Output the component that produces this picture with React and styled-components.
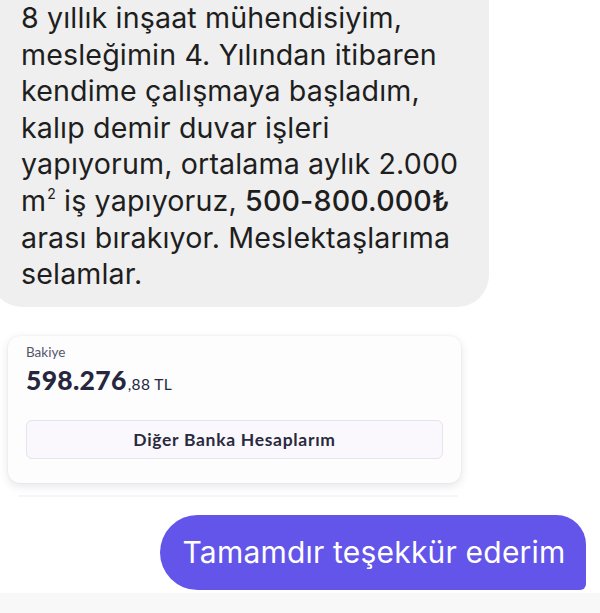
import React from "react";
import styled, { createGlobalStyle } from "styled-components";

const Global = createGlobalStyle`
  html, body { margin: 0; padding: 0; background: #ffffff; }
  body { width: 600px; height: 613px; overflow: hidden; }
  #root { width: 600px; height: 613px; }
`;

const Page = styled.div`
  position: relative;
  width: 600px;
  height: 613px;
  overflow: hidden;
  display: flex;
  flex-direction: column;
  background: #ffffff;
`;

const IncomingBubble = styled.div`
  margin-top: -20px;
  margin-left: -10px;
  width: 499px;
  box-sizing: border-box;
  background: #efefef;
  border-radius: 0 0 32px 32px;
  padding: 20px 10px 14px 31px;
  font-family: Inter, "Liberation Sans", sans-serif;
  font-size: 28.6px;
  line-height: 36.6px;
  color: #1e1e1e;
  letter-spacing: 0.15px;
`;

const Line = styled.div`
  white-space: nowrap;
  height: 36.6px;
`;

const Strong = styled.span`
  font-weight: 500;
`;

const Sup = styled.span`
  font-size: 14px;
  line-height: 0;
  position: relative;
  top: -12px;
  margin-left: 1px;
`;

const Card = styled.div`
  margin: 29px 0 0 8px;
  width: 453px;
  box-sizing: border-box;
  background: #fdfdfe;
  border-radius: 12px;
  box-shadow: 0 3px 10px rgba(40, 40, 70, 0.12), 0 0 2px rgba(40, 40, 70, 0.08);
  padding: 8px 18px 24px 18px;
  font-family: Lato, "Noto Sans", sans-serif;
`;

const Label = styled.div`
  font-size: 13.5px;
  color: #55556a;
  line-height: 17px;
`;

const Balance = styled.div`
  margin-top: 3px;
  display: flex;
  align-items: baseline;
  color: #26263f;
`;

const BigAmount = styled.span`
  font-size: 26.5px;
  font-weight: 900;
  letter-spacing: 0.3px;
`;

const SmallAmount = styled.span`
  font-size: 15.5px;
  font-weight: 400;
  margin-left: 1px;
  letter-spacing: 0.4px;
`;

const AccountsButton = styled.button`
  margin-top: 24px;
  width: 100%;
  height: 39px;
  box-sizing: border-box;
  border: 1px solid #e5e3eb;
  background: #faf8fc;
  border-radius: 6px;
  font-family: Lato, "Noto Sans", sans-serif;
  font-size: 17.5px;
  font-weight: 700;
  color: #2a2a3e;
  letter-spacing: 0.7px;
  display: flex;
  align-items: center;
  justify-content: center;
`;

const Divider = styled.div`
  margin: 12px 0 0 18px;
  width: 440px;
  height: 2px;
  background: #f6f6f8;
`;

const OutRow = styled.div`
  margin-top: 18px;
  display: flex;
  justify-content: flex-end;
  padding-right: 14px;
`;

const OutgoingBubble = styled.div`
  width: 426px;
  height: 75px;
  box-sizing: border-box;
  background: #6355e9;
  border-radius: 38px 30px 6px 38px;
  color: #ffffff;
  font-family: Inter, "Liberation Sans", sans-serif;
  font-size: 30px;
  display: flex;
  align-items: center;
  justify-content: center;
  padding-left: 2px;
  letter-spacing: 0.2px;
`;

const BottomBand = styled.div`
  margin-top: auto;
  height: 20px;
  background: #f8f8f8;
`;

export default function App() {
  return (
    <>
      <Global />
      <Page>
        <IncomingBubble>
          <Line>8 yıllık inşaat mühendisiyim,</Line>
          <Line>mesleğimin 4. Yılından itibaren</Line>
          <Line>kendime çalışmaya başladım,</Line>
          <Line>kalıp demir duvar işleri</Line>
          <Line>yapıyorum, ortalama aylık 2.000</Line>
          <Line>
            m<Sup>2</Sup> iş yapıyoruz, <Strong>500-800.000₺</Strong>
          </Line>
          <Line>arası bırakıyor. Meslektaşlarıma</Line>
          <Line>selamlar.</Line>
        </IncomingBubble>
        <Card>
          <Label>Bakiye</Label>
          <Balance>
            <BigAmount>598.276</BigAmount>
            <SmallAmount>,88 TL</SmallAmount>
          </Balance>
          <AccountsButton>Diğer Banka Hesaplarım</AccountsButton>
        </Card>
        <Divider />
        <OutRow>
          <OutgoingBubble>Tamamdır teşekkür ederim</OutgoingBubble>
        </OutRow>
        <BottomBand />
      </Page>
    </>
  );
}
